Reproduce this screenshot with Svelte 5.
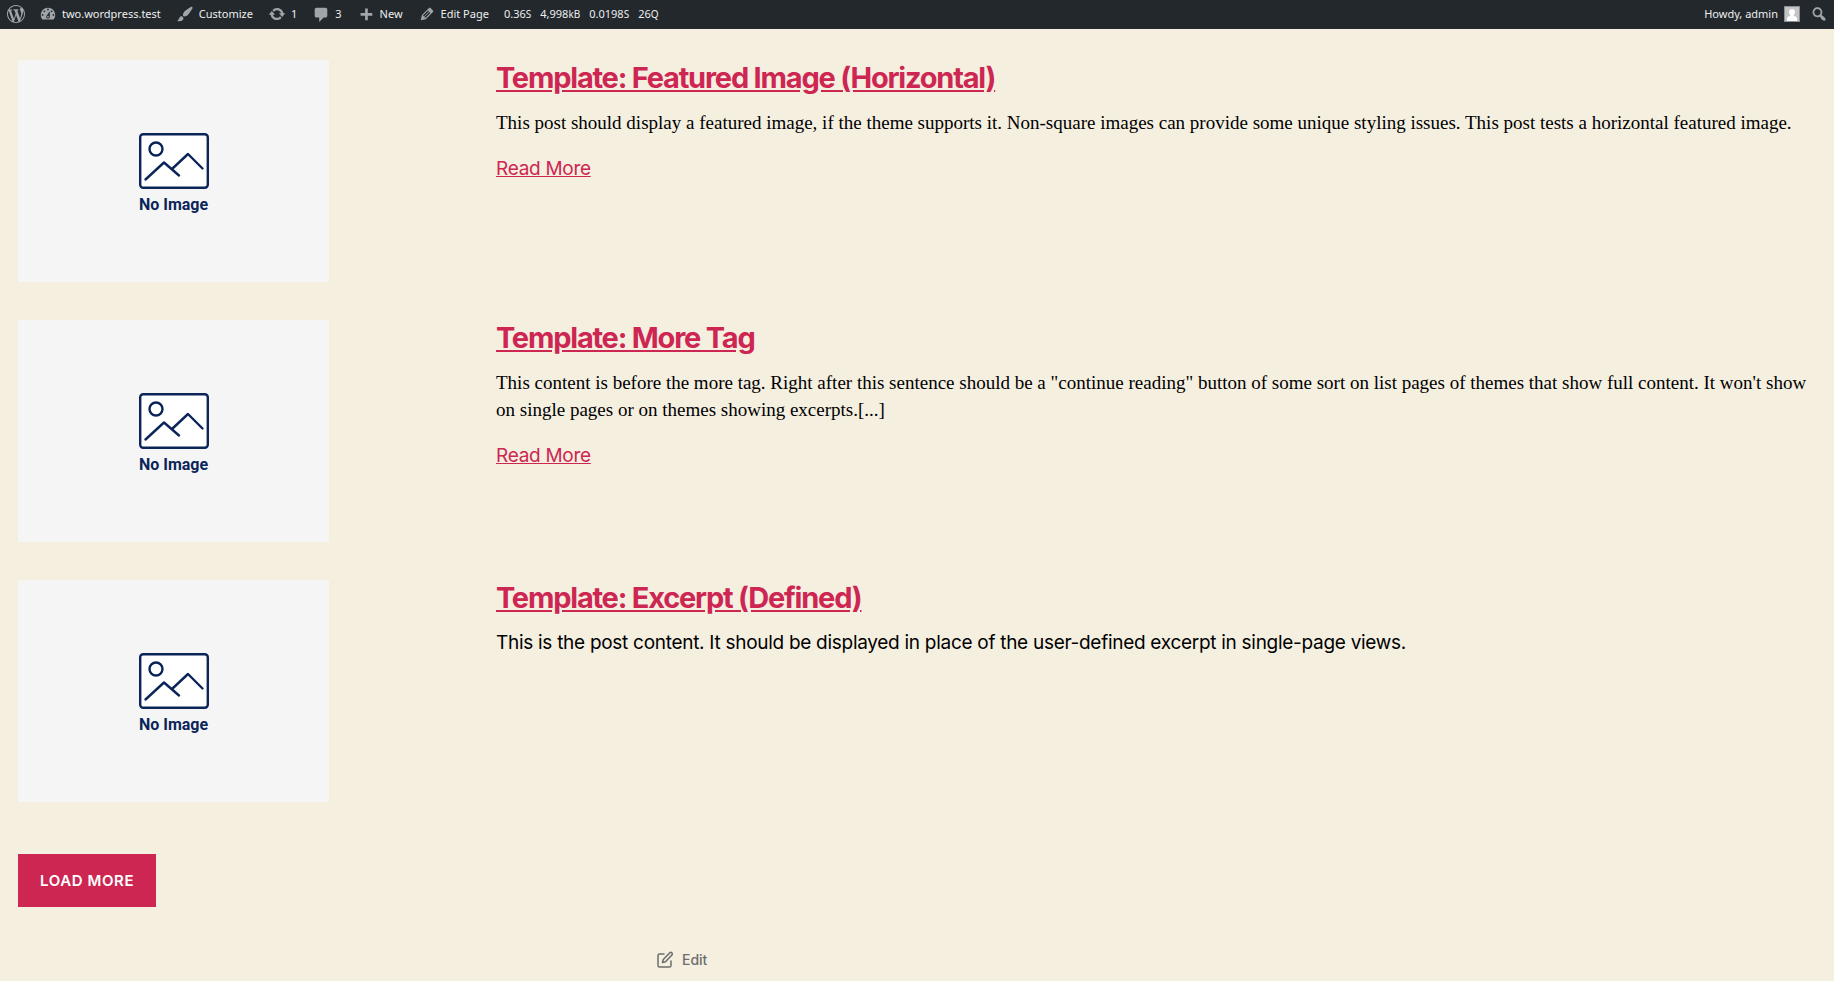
<script>
  const icons = {
    wordpress:
      'M20 10c0-5.51-4.49-10-10-10C4.48 0 0 4.49 0 10c0 5.52 4.48 10 10 10 5.51 0 10-4.48 10-10zM7.78 15.37L4.37 6.22c.55-.02 1.17-.08 1.17-.08.5-.06.44-1.13-.06-1.11 0 0-1.45.11-2.37.11-.18 0-.37 0-.58-.01C4.12 2.69 6.87 1.11 10 1.11c2.33 0 4.45.87 6.05 2.34-.68-.11-1.65.39-1.65 1.58 0 .74.45 1.36.9 2.1.35.61.55 1.36.55 2.46 0 1.49-1.4 5-1.4 5l-3.03-8.37c.54-.02.82-.17.82-.17.5-.05.44-1.25-.06-1.22 0 0-1.44.12-2.38.12-.87 0-2.33-.12-2.33-.12-.5-.03-.56 1.2-.06 1.22l.92.08 1.26 3.41zM17.41 10c.24-.64.74-1.87.43-4.25.7 1.29 1.05 2.71 1.05 4.25 0 3.29-1.73 6.24-4.4 7.78.97-2.59 1.94-5.2 2.92-7.78zM6.1 18.09C3.12 16.65 1.11 13.53 1.11 10c0-1.3.23-2.48.72-3.59C3.25 10.3 4.67 14.2 6.1 18.09zm4.03-6.63l2.58 6.98c-.86.29-1.76.45-2.71.45-.79 0-1.57-.11-2.29-.33.81-2.38 1.62-4.74 2.42-7.1z',
    dashboard:
      'M3.76 16h12.48c1.1-1.37 1.76-3.11 1.76-5 0-4.42-3.58-8-8-8s-8 3.58-8 8c0 1.89.66 3.63 1.76 5zM10 4c.55 0 1 .45 1 1s-.45 1-1 1-1-.45-1-1 .45-1 1-1zM6 6c.55 0 1 .45 1 1s-.45 1-1 1-1-.45-1-1 .45-1 1-1zm8 0c.55 0 1 .45 1 1s-.45 1-1 1-1-.45-1-1 .45-1 1-1zm-5.37 5.55L12 7v6c0 1.1-.9 2-2 2s-2-.9-2-2c0-.57.24-1.08.63-1.45zM4 10c.55 0 1 .45 1 1s-.45 1-1 1-1-.45-1-1 .45-1 1-1zm12 0c.55 0 1 .45 1 1s-.45 1-1 1-1-.45-1-1 .45-1 1-1zm-5 3c0-.55-.45-1-1-1s-1 .45-1 1 .45 1 1 1 1-.45 1-1z',
    brush:
      'M18.33 3.57s.27-.8-.31-1.36c-.53-.52-1.22-.24-1.22-.24-.61.3-5.76 3.47-7.67 5.57-.86.96-2.06 3.79-1.09 4.82.92.98 3.96-.17 4.79-1 2.06-2.06 5.21-7.17 5.5-7.79zM1.4 17.65c2.37-1.56 1.46-3.41 3.23-4.64.93-.65 2.22-.62 3.08.29.63.67.8 2.57-.16 3.46-1.57 1.45-4 1.55-6.15.89z',
    update:
      'M10.2 3.28c3.53 0 6.43 2.61 6.92 6h2.08l-3.5 4-3.5-4h2.32c-.45-1.97-2.21-3.45-4.32-3.45-1.45 0-2.73.71-3.54 1.78L4.95 5.66C6.23 4.2 8.11 3.28 10.2 3.28zm-.4 13.44c-3.52 0-6.43-2.61-6.92-6H.8l3.5-4c1.17 1.33 2.33 2.67 3.5 4H5.48c.45 1.97 2.21 3.45 4.32 3.45 1.45 0 2.73-.71 3.54-1.78l1.71 1.95c-1.28 1.46-3.15 2.38-5.25 2.38z',
    comment:
      'M5 3h10c1.1 0 2 .9 2 2v7c0 1.1-.9 2-2 2h-2l-5 5v-5H5c-1.1 0-2-.9-2-2V5c0-1.1.9-2 2-2z',
    plus: 'M17 9v3h-5v5H9v-5H4V9h5V4h3v5h5z',
    edit: 'M13.89 3.39l2.71 2.72c.46.46.42 1.24.03 1.64l-8.01 8.02-5.56 1.16 1.16-5.58s7.6-7.63 7.99-8.03c.39-.39 1.22-.39 1.68.07zm-2.73 2.79l-5.59 5.61 1.11 1.11 5.54-5.65zm-2.97 8.23l5.58-5.6-1.07-1.08-5.59 5.6z',
    search:
      'M12.14 4.18c1.87 1.87 2.11 4.75.72 6.89.12.1.22.21.36.31.2.16.47.36.81.59.34.24.56.39.66.47.42.31.73.57.94.78.32.32.6.65.84 1 .25.35.44.69.59 1.04.14.35.21.68.18 1-.02.32-.14.59-.36.81s-.49.34-.81.36c-.31.02-.65-.04-.99-.19-.35-.14-.7-.34-1.04-.59-.35-.24-.68-.52-1-.84-.21-.21-.47-.52-.77-.93-.1-.13-.25-.35-.47-.66-.22-.32-.4-.57-.56-.78-.16-.2-.29-.35-.44-.5-2.07 1.09-4.69.76-6.44-.98-2.14-2.15-2.14-5.64 0-7.78 2.15-2.15 5.63-2.15 7.78 0zm-1.41 6.36c1.36-1.37 1.36-3.58 0-4.95-1.37-1.37-3.59-1.37-4.95 0-1.37 1.37-1.37 3.58 0 4.95 1.36 1.37 3.58 1.37 4.95 0z'
  };

  const menu = [
    { icon: 'wordpress', label: '' },
    { icon: 'dashboard', label: 'two.wordpress.test' },
    { icon: 'brush', label: 'Customize' },
    { icon: 'update', label: '1' },
    { icon: 'comment', label: '3' },
    { icon: 'plus', label: 'New' },
    { icon: 'edit', label: 'Edit Page' }
  ];

  const stats = [
    ['0.36', 'S'],
    ['4,998', 'kB'],
    ['0.0198', 'S'],
    ['26', 'Q']
  ];

  const posts = [
    {
      title: 'Template: Featured Image (Horizontal)',
      text: 'This post should display a featured image, if the theme supports it. Non-square images can provide some unique styling issues. This post tests a horizontal featured image.',
      excerpt: true
    },
    {
      title: 'Template: More Tag',
      text: 'This content is before the more tag. Right after this sentence should be a "continue reading" button of some sort on list pages of themes that show full content. It won\'t show on single pages or on themes showing excerpts.[...]',
      excerpt: true
    },
    {
      title: 'Template: Excerpt (Defined)',
      text: 'This is the post content. It should be displayed in place of the user-defined excerpt in single-page views.',
      excerpt: false
    }
  ];
</script>

{#snippet dashicon(name)}
  <svg class="dashicon" viewBox="0 0 20 20" aria-hidden="true"><path d={icons[name]} /></svg>
{/snippet}

<nav class="adminbar">
  <div class="group">
    {#each menu as item}
      <a class="item" href="#top">
        {@render dashicon(item.icon)}
        {#if item.label}<span>{item.label}</span>{/if}
      </a>
    {/each}
    <a class="item stats" href="#top">
      {#each stats as [value, unit]}
        <span>{value}<small>{unit}</small></span>
      {/each}
    </a>
  </div>
  <div class="group">
    <a class="item" href="#top">
      <span>Howdy, admin</span>
      <svg class="avatar" viewBox="0 0 16 16" aria-hidden="true">
        <rect width="16" height="16" fill="#8c8f94" />
        <rect x="1" y="1" width="14" height="14" fill="#c5c5c5" />
        <path
          fill="#fff"
          d="M8 3c1.800 0 3 1.300 3 3.100 0 1.200-.5 2.200-1.200 2.800v1c1.600.4 3.200 1 3.200 2.500V15H3v-2.600c0-1.500 1.600-2.100 3.200-2.500v-1C5.500 8.300 5 7.300 5 6.100 5 4.300 6.200 3 8 3z"
        />
      </svg>
    </a>
    <a class="item search" href="#top">{@render dashicon('search')}</a>
  </div>
</nav>

<main>
  <div class="posts">
    {#each posts as post}
      <article>
        <div class="thumb">
          <svg viewBox="0 0 70 56" aria-hidden="true">
            <rect x="1.200" y="1.200" width="67.600" height="53.600" rx="3" fill="#fff" />
            <circle cx="17" cy="16" r="6.500" />
            <path d="M6.500 46.500 25 29.500 40 42.500M33 36 49 21l14.500 14.500" />
          </svg>
          <span>No Image</span>
        </div>
        <div class="body">
          <h2><a href="#top">{post.title}</a></h2>
          <p class:excerpt={post.excerpt}>{post.text}</p>
          {#if post.excerpt}<a class="more" href="#top">Read More</a>{/if}
        </div>
      </article>
    {/each}
  </div>
  <button type="button">Load More</button>
  <div class="edit">
    <a href="#top">
      <svg viewBox="0 0 18 18" aria-hidden="true">
        <path d="M8 3H3.500A1.500 1.500 0 0 0 2 4.500v10A1.500 1.500 0 0 0 3.500 16h10a1.500 1.500 0 0 0 1.500-1.500V10" />
        <path d="M13.600 1.900a1.500 1.500 0 0 1 2.300 2.200L9.500 10.700l-3 .8.8-3z" />
      </svg>
      <span>Edit</span>
    </a>
  </div>
</main>

<style>
  :global(body) {
    background: #f5efe0;
    color: #000;
    font-family: Inter, 'Liberation Sans', sans-serif;
    font-size: 19px;
    line-height: 27px;
    letter-spacing: -0.015em;
  }

  .adminbar {
    display: flex;
    justify-content: space-between;
    box-sizing: border-box;
    height: 29px;
    padding-bottom: 1px;
    background: #23282d;
    font: 11px/28px 'Noto Sans', 'Open Sans', sans-serif;
    letter-spacing: normal;
  }

  .group {
    display: flex;
  }

  .item {
    display: flex;
    align-items: center;
    gap: 5px;
    padding: 0 7px;
    color: #eee;
    text-decoration: none;
    white-space: nowrap;
  }

  .item span {
    padding-right: 1px;
  }

  .item small {
    font-size: 10px;
  }

  .stats {
    gap: 8px;
  }

  .search {
    padding: 0 6px 0 3px;
  }

  .dashicon {
    width: 18px;
    height: 18px;
    fill: #a0a5aa;
  }

  .avatar {
    width: 16px;
    height: 16px;
  }

  main {
    padding: 31px 18px 0;
  }

  .posts {
    display: grid;
    gap: 38px;
    margin-bottom: 52px;
  }

  article {
    display: grid;
    grid-template-columns: minmax(0, 311fr) minmax(0, 1320fr);
    column-gap: 167px;
    align-items: start;
  }

  .thumb {
    display: flex;
    flex-direction: column;
    align-items: center;
    box-sizing: border-box;
    padding-top: 73px;
    aspect-ratio: 7 / 5;
    background: #f5f5f5;
    color: #0b2559;
    font: 700 16px/24px Roboto, sans-serif;
    letter-spacing: normal;
  }

  .thumb svg {
    width: 70px;
    height: 56px;
    margin-bottom: 4px;
    fill: none;
    stroke: currentColor;
    stroke-width: 2.400;
    stroke-linecap: round;
    stroke-linejoin: round;
  }

  h2 {
    margin: 0 0 13px;
    font-size: 29px;
    font-weight: 700;
    line-height: 36px;
    letter-spacing: -0.042em;
  }

  h2 a,
  .more {
    color: #cd2653;
  }

  p {
    margin: 0 0 19px;
  }

  .excerpt {
    font-family: 'Liberation Serif', serif;
    letter-spacing: normal;
  }

  button {
    display: block;
    padding: 18px 22px;
    border: 0;
    background: #cd2653;
    color: #fff;
    font: 600 15px/17px Inter, sans-serif;
    letter-spacing: 0.04em;
    text-transform: uppercase;
  }

  .edit {
    max-width: 522px;
    margin: 39px auto 0;
  }

  .edit a {
    display: inline-flex;
    align-items: center;
    gap: 8px;
    color: #6d6d6d;
    font-size: 14px;
    font-weight: 500;
    letter-spacing: normal;
    text-decoration: none;
  }

  .edit svg {
    width: 18px;
    height: 18px;
    fill: none;
    stroke: currentColor;
    stroke-width: 1.500;
    stroke-linecap: round;
    stroke-linejoin: round;
  }
</style>
